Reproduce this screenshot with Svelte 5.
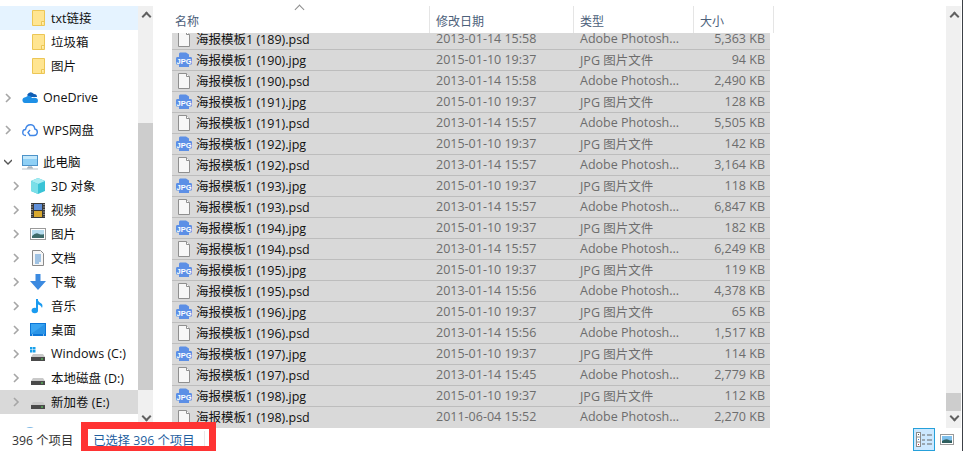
<script>
  const quick = ['txt链接', '垃圾箱', '图片'];
  const drives = [
    { label: '3D 对象', icon: 'cube' },
    { label: '视频', icon: 'film' },
    { label: '图片', icon: 'picture' },
    { label: '文档', icon: 'doc' },
    { label: '下载', icon: 'down' },
    { label: '音乐', icon: 'music' },
    { label: '桌面', icon: 'desktop' },
    { label: 'Windows (C:)', icon: 'winDisk' },
    { label: '本地磁盘 (D:)', icon: 'disk' },
    { label: '新加卷 (E:)', icon: 'disk', selected: true }
  ];

  const jpgDate = '2015-01-10 19:37';
  const psdType = 'Adobe Photosh...';
  const jpgType = 'JPG 图片文件';

  // [序号, 扩展名, 修改日期, 大小]
  const files = [
    [189, 'psd', '2013-01-14 15:58', '5,363 KB'],
    [190, 'jpg', jpgDate, '94 KB'],
    [190, 'psd', '2013-01-14 15:58', '2,490 KB'],
    [191, 'jpg', jpgDate, '128 KB'],
    [191, 'psd', '2013-01-14 15:57', '5,505 KB'],
    [192, 'jpg', jpgDate, '142 KB'],
    [192, 'psd', '2013-01-14 15:57', '3,164 KB'],
    [193, 'jpg', jpgDate, '118 KB'],
    [193, 'psd', '2013-01-14 15:57', '6,847 KB'],
    [194, 'jpg', jpgDate, '182 KB'],
    [194, 'psd', '2013-01-14 15:57', '6,249 KB'],
    [195, 'jpg', jpgDate, '119 KB'],
    [195, 'psd', '2013-01-14 15:56', '4,378 KB'],
    [196, 'jpg', jpgDate, '65 KB'],
    [196, 'psd', '2013-01-14 15:56', '1,517 KB'],
    [197, 'jpg', jpgDate, '114 KB'],
    [197, 'psd', '2013-01-14 15:45', '2,779 KB'],
    [198, 'jpg', jpgDate, '112 KB'],
    [198, 'psd', '2011-06-04 15:52', '2,270 KB']
  ];
</script>

{#snippet chevron(open)}
  <svg class="chev" width="8" height="10" viewBox="0 0 8 10">
    {#if open}
      <path d="M0 3 L4 7 L8 3" fill="none" stroke="#555" stroke-width="1.4" />
    {:else}
      <path d="M2 1 L6 5 L2 9" fill="none" stroke="#a6a6a6" stroke-width="1.6" />
    {/if}
  </svg>
{/snippet}

{#snippet icon(name)}
  <svg class="ico" width="16" height="16" viewBox="0 0 16 16">
    {#if name === 'folder'}
      <path d="M2.500 0.500 H14.500 V15.500 H2.500 Z" fill="#ffe591" stroke="#ecc655" />
      <path d="M11.500 15 V11.500 H14" fill="#fff2b8" stroke="#ecc655" />
    {:else if name === 'onedrive'}
      <path d="M5 5 Q8 0 12 4 Q15 4 15 7 L7 7 Z" fill="#0f5eb5" />
      <path d="M1 12 Q-1 8 4 7 Q8 4 10 8 Q16 7 16 11 Q16 13 14 13 H3 Q1.500 13 1 12 Z" fill="#1e90e6" />
    {:else if name === 'wps'}
      <path d="M4 13.500 Q0.500 13.500 0.800 10 Q1 7.500 3.500 7.500 Q4.500 2.500 9 2.800 Q12.500 3.200 12.800 7 Q15.500 7.500 15.300 10.500 Q15 13.500 12 13.500 H8 L6 10.500 L8 8" fill="none" stroke="#3f86e6" stroke-width="1.4" />
    {:else if name === 'pc'}
      <rect x="0.500" y="1.500" width="15" height="10" fill="#8fd0f5" stroke="#4d93c9" />
      <rect x="1" y="2" width="14" height="3" fill="#c3e8fb" />
      <path d="M5 14 H11 M7 12 V14 M9 12 V14" stroke="#8c9aa5" />
      <rect x="0" y="14.500" width="16" height="1" fill="#b8c2c9" />
    {:else if name === 'cube'}
      <path d="M8 0 L15 3 V13 L8 16 L1 13 V3 Z" fill="#39c3d6" />
      <path d="M8 0 L15 3 L8 6 L1 3 Z" fill="#a5ecf2" />
      <path d="M1 3 L8 6 V16 L1 13 Z" fill="#7adfe8" />
    {:else if name === 'film'}
      <rect x="1" y="1" width="14" height="15" fill="#3a3a3a" />
      <rect x="4" y="2" width="8" height="6" fill="#5f8fd8" />
      <rect x="4" y="9" width="8" height="6" fill="#d9a92f" />
      <path d="M2 2 V15 M14 2 V15" stroke="#ddd" stroke-dasharray="1 1.500" />
    {:else if name === 'picture'}
      <rect x="0.500" y="2.500" width="15" height="11" fill="#fff" stroke="#9a9a9a" />
      <rect x="2" y="4" width="12" height="8" fill="#b6dcef" />
      <path d="M2 10 Q6 6 9 8 Q12 9 14 8 V12 H2 Z" fill="#3d6b6a" />
    {:else if name === 'doc'}
      <path d="M2.500 0.500 H10.500 L13.500 3.500 V15.500 H2.500 Z" fill="#f6f6f6" stroke="#8a8a8a" />
      <path d="M5 5 H11 M5 7 H11 M5 9 H11 M5 11 H11 M5 13 H9" stroke="#4a8fd0" />
    {:else if name === 'down'}
      <path d="M5.500 0 H10.500 V7 H16 L8 16 L0 7 H5.500 Z" fill="#3c8ae0" />
    {:else if name === 'music'}
      <path d="M7 1 V12" stroke="#1a9bf0" stroke-width="2" />
      <ellipse cx="4.800" cy="12.500" rx="3.200" ry="2.800" fill="#1a9bf0" />
      <path d="M7 1 Q9 5 12 6 Q13 8 12 10 Q11 7 7 6 Z" fill="#1a9bf0" />
    {:else if name === 'desktop'}
      <rect x="0" y="1" width="16" height="13" fill="#0c77d8" />
      <rect x="1" y="2" width="14" height="10" fill="#3aa5f2" />
      <path d="M1 12 L15 2 V12 Z" fill="#2b94e6" />
      <path d="M2 13 H3 M13 13 H14" stroke="#fff" />
    {:else if name === 'winDisk'}
      <path d="M0 1 H2.500 V3.500 H0 Z M3 1 H5.500 V3.500 H3 Z M0 4 H2.500 V6.500 H0 Z M3 4 H5.500 V6.500 H3 Z" fill="#19a0ea" />
      <path d="M3 8 H13 L15 11 H1 Z" fill="#c9c9c9" />
      <rect x="1" y="11" width="14" height="4" fill="#4a4a4a" />
      <rect x="11" y="12.500" width="2" height="1" fill="#5fe05f" />
    {:else if name === 'disk'}
      <path d="M3 8 H13 L15 11 H1 Z" fill="#c9c9c9" />
      <rect x="1" y="11" width="14" height="4" fill="#4a4a4a" />
      <rect x="11" y="12.500" width="2" height="1" fill="#5fe05f" />
    {:else if name === 'globe'}
      <circle cx="8" cy="8" r="7" fill="#7fb9e6" />
    {:else if name === 'jpg'}
      <path d="M4 0.500 H10 L13 2.500 V5 H15 Q16 5 16 6.500 V11 Q16 12.500 15 12.500 H13 V15 H3 V12.500 H1 Q0 12.500 0 11 V6.500 Q0 5 1 5 H3 V1.500 Z" fill="#5c8fe6" />
      <text x="8" y="11.500" text-anchor="middle" class="jpg-label">JPG</text>
    {:else if name === 'psd'}
      <path d="M2.500 0.500 H10.500 L13.500 3.500 V15.500 H2.500 Z" fill="#f7f7f7" stroke="#8f8f8f" />
      <path d="M10.500 0.500 V3.500 H13.500" fill="#fff" stroke="#8f8f8f" />
    {/if}
  </svg>
{/snippet}

<div class="window">
  <div class="panes">
    <aside class="nav">
      <div class="nav-list">
        <div class="group">
          {#each quick as name, i}
            <div class="nav-row sub" class:hover={i === 0}>
              <span class="chev-slot"></span>
              {@render icon('folder')}
              <span class="label">{name}</span>
            </div>
          {/each}
        </div>
        <div class="group">
          <div class="nav-row top">
            <span class="chev-slot">{@render chevron(false)}</span>
            {@render icon('onedrive')}
            <span class="label">OneDrive</span>
          </div>
        </div>
        <div class="group">
          <div class="nav-row top">
            <span class="chev-slot">{@render chevron(false)}</span>
            {@render icon('wps')}
            <span class="label">WPS网盘</span>
          </div>
        </div>
        <div class="group">
          <div class="nav-row top">
            <span class="chev-slot">{@render chevron(true)}</span>
            {@render icon('pc')}
            <span class="label">此电脑</span>
          </div>
          {#each drives as d}
            <div class="nav-row sub" class:selected={d.selected}>
              <span class="chev-slot">{@render chevron(false)}</span>
              {@render icon(d.icon)}
              <span class="label">{d.label}</span>
            </div>
          {/each}
        </div>
        <!-- 下一组只露出图标顶部 -->
        <div class="nav-row top">
          <span class="chev-slot"></span>
          {@render icon('globe')}
        </div>
      </div>
      <div class="scrollbar nav-scroll">
        <span class="arrow up"></span>
        <span class="gap-a"></span>
        <span class="thumb"></span>
        <span class="track-end"></span>
        <span class="arrow down"></span>
      </div>
    </aside>

    <main class="files">
      <div class="header">
        <span class="caret"></span>
        <div class="hcell name-h">名称</div>
        <div class="hcell">修改日期</div>
        <div class="hcell">类型</div>
        <div class="hcell">大小</div>
      </div>
      <div class="rows">
        <div class="rows-inner">
          {#each files as f}
            <div class="row">
              <div class="name">
                {@render icon(f[1])}
                <span class="fname">海报模板1 ({f[0]}).{f[1]}</span>
              </div>
              <div class="meta">{f[2]}</div>
              <div class="meta">{f[1] === 'jpg' ? jpgType : psdType}</div>
              <div class="meta size">{f[3]}</div>
            </div>
          {/each}
        </div>
      </div>
    </main>

    <div class="scrollbar main-scroll">
      <span class="arrow up"></span>
      <span class="gap-b"></span>
      <span class="thumb main-thumb"></span>
      <span class="arrow down"></span>
    </div>
  </div>

  <footer class="status">
    <span class="count">396 个项目</span>
    <span class="picked">已选择 396 个项目</span>
    <span class="divider"></span>
    <div class="views">
      <button class="view active" aria-label="详细信息">
        <svg width="17" height="15" viewBox="0 0 17 15">
          <rect x="0.500" y="0.500" width="4" height="14" fill="#fff" stroke="#8c8c8c" />
          <path d="M1 5 H4 M1 10 H4" stroke="#8c8c8c" />
          <rect x="2" y="2" width="1" height="1" fill="#555" />
          <rect x="2" y="7" width="1" height="1" fill="#3a7fd0" />
          <rect x="2" y="12" width="1" height="1" fill="#d03030" />
          <path d="M6 3 H9 M11 3 H16 M6 8 H9 M11 8 H16 M6 12 H9 M11 12 H16" stroke="#666" stroke-width="1.200" />
        </svg>
      </button>
      <button class="view" aria-label="大图标">
        <svg width="14" height="11" viewBox="0 0 14 11">
          <rect x="0.500" y="0.500" width="13" height="10" fill="#fff" stroke="#9a9a9a" />
          <rect x="2" y="2" width="10" height="7" fill="#7fc0ec" />
          <path d="M2 7 Q6 4 9 6 Q11 7 12 6 V9 H2 Z" fill="#2f5f5f" />
        </svg>
      </button>
    </div>
  </footer>

  <!-- 截图上的红色标注框 -->
  <div class="callout"></div>
</div>

<style>
  :global(body) {
    background: #fff;
  }

  .window {
    position: relative;
    width: 963px;
    height: 451px;
    box-sizing: border-box;
    border-right: 1px solid #3c4046;
    display: flex;
    flex-direction: column;
    overflow: hidden;
    background: #fff;
    font-family: "Open Sans", "Noto Sans CJK SC", sans-serif;
    font-size: 12.5px;
    color: #111;
  }

  .panes {
    flex: none;
    height: 422px;
    padding-top: 6px;
    display: flex;
  }

  .nav {
    flex: none;
    width: 153px;
    height: 422px;
    display: flex;
    overflow: hidden;
  }

  .nav-list {
    flex: none;
    width: 138px;
  }

  .group {
    margin-bottom: 8px;
  }

  .nav-row {
    height: 24px;
    display: flex;
    align-items: center;
    white-space: nowrap;
  }

  .nav-row.hover {
    background: #e5f3ff;
  }

  .nav-row.selected {
    background: #d9d9d9;
  }

  .nav-row .ico {
    flex: none;
    margin-right: 5px;
  }

  .label {
    position: relative;
    top: -1px;
  }

  .chev-slot {
    flex: none;
    display: flex;
    box-sizing: border-box;
  }

  .top .chev-slot {
    width: 22px;
    padding-left: 4px;
  }

  .sub .chev-slot {
    width: 30px;
    padding-left: 12px;
  }

  .scrollbar {
    flex: none;
    display: flex;
    flex-direction: column;
    background: #f0f0f0;
  }

  .nav-scroll {
    width: 15px;
    height: 422px;
  }

  .main-scroll {
    width: 15px;
    margin-left: auto;
    margin-right: 1px;
    height: 422px;
  }

  .gap-a {
    height: 100px;
    flex: none;
  }

  .gap-b {
    height: 370px;
    flex: none;
  }

  .thumb {
    flex: none;
    height: 267px;
    background: #cdcdcd;
  }

  .main-thumb {
    height: 18px;
  }

  .track-end {
    flex: 1;
  }

  .arrow {
    flex: none;
    height: 17px;
    position: relative;
  }

  .arrow::before {
    content: '';
    position: absolute;
    left: 4.500px;
    width: 5px;
    height: 5px;
    border: solid #606060;
    border-width: 2px 0 0 2px;
    transform: rotate(45deg);
    top: 7px;
  }

  .arrow.down::before {
    transform: rotate(225deg);
    top: 2px;
  }

  .files {
    flex: none;
    width: 602px;
    margin-left: 19px;
    display: flex;
    flex-direction: column;
  }

  .header {
    position: relative;
    height: 27px;
    flex: none;
    display: grid;
    grid-template-columns: 258px 144px 120px 80px;
    font-size: 12px;
    color: #4c607a;
  }

  .hcell {
    display: flex;
    align-items: center;
    padding-left: 6px;
    padding-top: 2px;
    box-sizing: border-box;
    border-right: 1px solid #e5e5e5;
  }

  .name-h {
    padding-left: 3px;
  }

  .caret {
    position: absolute;
    left: 124px;
    top: 0px;
    width: 6px;
    height: 6px;
    border: solid #8c8c8c;
    border-width: 1px 0 0 1px;
    transform: rotate(45deg);
  }

  .rows {
    height: 395px;
    overflow: hidden;
  }

  /* 列表已滚动，第一行被表头遮住一部分 */
  .rows-inner {
    margin-top: -4px;
    width: 598px;
  }

  .row {
    display: grid;
    grid-template-columns: 257px 144px 120px 77px;
    height: 21px;
    box-sizing: border-box;
    align-items: center;
    background: #d9d9d9;
    border-bottom: 1px solid #bdbdbd;
  }

  .row:last-child {
    border-bottom: none;
  }

  .name {
    display: flex;
    align-items: center;
    padding-left: 4px;
    white-space: nowrap;
  }

  .name .ico {
    flex: none;
    margin-right: 4px;
  }

  .fname,
  .meta {
    position: relative;
    top: -1px;
  }

  .meta {
    padding-left: 7px;
    color: #6d6d6d;
    white-space: nowrap;
  }

  .size {
    padding: 0 5px 0 0;
    text-align: right;
  }

  :global(.jpg-label) {
    font-family: "Liberation Sans", sans-serif;
    font-size: 7.500px;
    font-weight: 700;
    fill: #fff;
  }

  .status {
    flex: 1;
    display: flex;
    align-items: center;
    position: relative;
    font-size: 12.300px;
  }

  .count {
    margin-left: 12px;
    color: #333;
  }

  .picked {
    margin-left: 20px;
    color: #1f5f9f;
  }

  .divider {
    width: 1px;
    height: 17px;
    background: #e8e8e8;
    margin-left: 10px;
  }

  .views {
    margin-left: auto;
    margin-right: 7px;
    display: flex;
    align-items: center;
    gap: 4px;
  }

  .view {
    appearance: none;
    padding: 0;
    border: none;
    background: none;
    display: flex;
    align-items: center;
    justify-content: center;
    width: 16px;
    height: 22px;
  }

  .view.active {
    width: 22px;
    height: 23px;
    box-sizing: border-box;
    background: #cce8ff;
    border: 1px solid #26a0da;
  }

  .callout {
    position: absolute;
    left: 81px;
    top: 422px;
    width: 135px;
    height: 29px;
    box-sizing: border-box;
    border: solid #ff3333;
    border-width: 7px 7px 5px 7px;
  }
</style>
